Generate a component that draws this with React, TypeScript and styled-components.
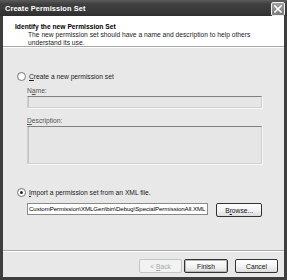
import React from 'react';
import styled, { createGlobalStyle } from 'styled-components';

const GlobalStyle = createGlobalStyle`
  html, body {
    margin: 0;
    padding: 0;
    background: #ffffff;
  }
  body {
    font-family: "Liberation Sans", Arial, sans-serif;
  }
`;

const Window = styled.div`
  width: 287px;
  height: 280px;
  box-sizing: border-box;
  display: flex;
  flex-direction: column;
  background: #3e3e3e;
  padding: 0 3px 3px;
  font-size: 6.7px;
  color: #1a1a1a;
  overflow: hidden;
`;

const TitleBar = styled.div`
  height: 16px;
  margin: 0 -3px;
  padding: 0 2px 0 5px;
  display: flex;
  align-items: center;
  justify-content: space-between;
  background: linear-gradient(#5c5c5c 0%, #3f3f3f 25%, #383838 70%, #2e2e2e 100%);
  flex-shrink: 0;
`;

const Title = styled.span`
  color: #ffffff;
  font-weight: bold;
  font-size: 7.4px;
  letter-spacing: 0.1px;
`;

const CloseButton = styled.div`
  width: 12px;
  height: 12px;
  margin-top: 2px;
  border: 1px solid #f0f0f0;
  border-radius: 2px;
  background: linear-gradient(#a0a0a0, #7a7a7a);
  display: flex;
  align-items: center;
  justify-content: center;
`;

const Header = styled.div`
  height: 31px;
  background: #ffffff;
  padding: 6px 0 0 12px;
  box-sizing: border-box;
  border-bottom: 1px solid #a8a8a8;
  flex-shrink: 0;
`;

const HeaderTitle = styled.div`
  font-weight: bold;
  line-height: 9px;
  color: #000;
`;

const HeaderText = styled.div`
  margin-left: 13px;
  line-height: 8px;
  color: #222;
`;

const Body = styled.div`
  flex: 1;
  background: #e8e8e8;
  border-top: 1px solid #ffffff;
  padding: 24px 22px 0 14px;
  display: flex;
  flex-direction: column;
`;

const RadioRow = styled.label<{ $top: number }>`
  display: flex;
  align-items: center;
  gap: 3px;
  height: 9px;
  margin-top: ${p => p.$top}px;
`;

const Radio = styled.span<{ $checked?: boolean }>`
  width: 7px;
  height: 7px;
  border-radius: 50%;
  border: 1px solid #7a7a7a;
  background: radial-gradient(circle at 60% 60%, #ffffff 40%, #d8d8d8 100%);
  display: flex;
  align-items: center;
  justify-content: center;
  &::after {
    content: '';
    width: 3px;
    height: 3px;
    border-radius: 50%;
    background: ${p => (p.$checked ? '#2a2a2a' : 'transparent')};
  }
`;

const Indent = styled.div`
  margin-left: 10px;
  display: flex;
  flex-direction: column;
`;

const FieldLabel = styled.div<{ $top: number }>`
  line-height: 8px;
  margin-top: ${p => p.$top}px;
  color: #555;
`;

const TextBox = styled.div<{ $height: number; $enabled?: boolean }>`
  height: ${p => p.$height}px;
  box-sizing: border-box;
  margin-top: 1px;
  background: ${p => (p.$enabled ? '#ffffff' : '#e6e6e6')};
  border: 1px solid ${p => (p.$enabled ? '#8a8a8a' : '#cfcfcf')};
  border-top-color: ${p => (p.$enabled ? '#8a8a8a' : '#808080')};
  box-shadow: ${p => (p.$enabled ? 'none' : 'inset 1px 0 0 #c4c4c4, 1px 1px 0 #f8f8f8')};
  line-height: ${p => p.$height - 2}px;
  padding-left: 1px;
  white-space: nowrap;
  overflow: hidden;
  color: #000;
`;

const PathRow = styled.div`
  display: flex;
  align-items: flex-start;
  gap: 8px;
  margin-top: 6px;
`;

const PathBox = styled(TextBox)`
  width: 182px;
  margin-top: 0;
  font-size: 6.1px;
  letter-spacing: -0.05px;
`;

const Footer = styled.div`
  height: 27px;
  box-sizing: border-box;
  background: #e8e8e8;
  border-top: 1px solid #a8a8a8;
  box-shadow: inset 0 1px 0 #ffffff;
  padding: 8px 6px 0 0;
  display: flex;
  justify-content: flex-end;
  align-items: flex-start;
  flex-shrink: 0;
`;

const Button = styled.button<{ $width: number; $variant?: 'default' | 'disabled'; $gap?: number }>`
  width: ${p => p.$width}px;
  height: 14px;
  margin-left: ${p => p.$gap ?? 0}px;
  padding: 0;
  box-sizing: border-box;
  font-family: inherit;
  font-size: 6.7px;
  border-radius: 2px;
  border: 1px solid ${p => (p.$variant === 'disabled' ? '#c4c4c4' : '#333333')};
  background: ${p => (p.$variant === 'disabled' ? '#f2f2f2' : 'linear-gradient(#ffffff, #f0f0f0 60%, #dcdcdc)')};
  box-shadow: ${p => (p.$variant === 'default' ? 'inset 0 0 0 1px #b8b8b8' : 'none')};
  color: ${p => (p.$variant === 'disabled' ? '#a8a8a8' : '#111')};
  u {
    text-decoration: underline;
  }
`;

const App = () => {
  return (
    <>
      <GlobalStyle />
      <Window>
        <TitleBar>
          <Title>Create Permission Set</Title>
          <CloseButton>
            <svg width="8" height="8" viewBox="0 0 8 8">
              <path d="M1 1 L7 7 M7 1 L1 7" stroke="#ffffff" strokeWidth="1.6" strokeLinecap="square" />
            </svg>
          </CloseButton>
        </TitleBar>
        <Header>
          <HeaderTitle>Identify the new Permission Set</HeaderTitle>
          <HeaderText>The new permission set should have a name and description to help others</HeaderText>
          <HeaderText>understand its use.</HeaderText>
        </Header>
        <Body>
          <RadioRow $top={0}>
            <Radio />
            <span><u>C</u>reate a new permission set</span>
          </RadioRow>
          <Indent>
            <FieldLabel $top={6}>N<u>a</u>me:</FieldLabel>
            <TextBox $height={12} />
            <FieldLabel $top={9}><u>D</u>escription:</FieldLabel>
            <TextBox $height={38} />
          </Indent>
          <RadioRow $top={24}>
            <Radio $checked />
            <span><u>I</u>mport a permission set from an XML file.</span>
          </RadioRow>
          <Indent>
            <PathRow>
              <PathBox $height={12} $enabled>CustomPermission\XMLGen\bin\Debug\SpecialPermissionAll.XML</PathBox>
              <Button $width={46}>B<u>r</u>owse...</Button>
            </PathRow>
          </Indent>
        </Body>
        <Footer>
          <Button $width={43} $variant="disabled">&lt; <u>B</u>ack</Button>
          <Button $width={44} $variant="default" $gap={2}>Finish</Button>
          <Button $width={43} $gap={7}>Cancel</Button>
        </Footer>
      </Window>
    </>
  );
};

export default App;
